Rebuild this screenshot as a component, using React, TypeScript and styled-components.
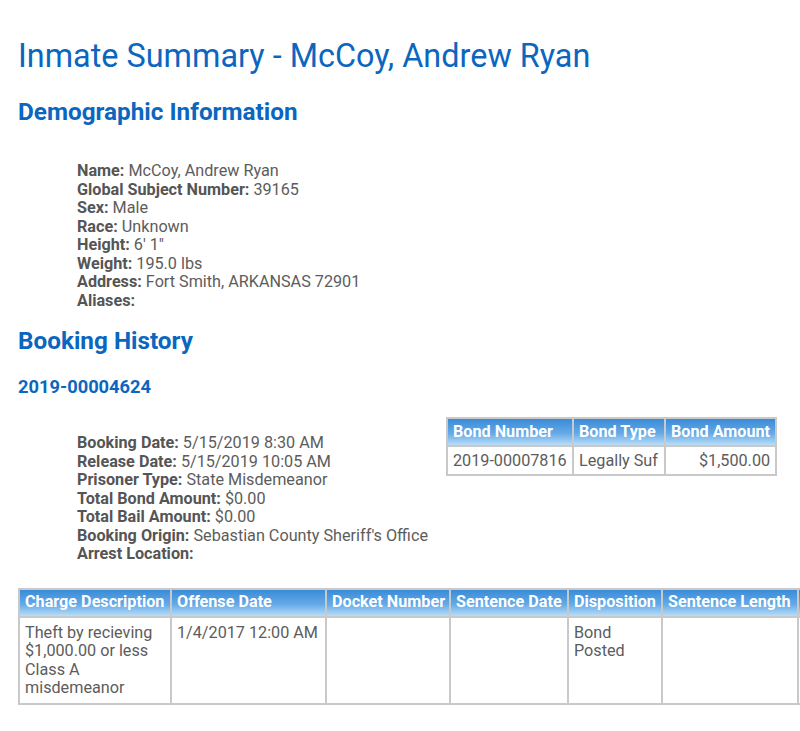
import React from 'react'
import styled, { createGlobalStyle } from 'styled-components'

const GlobalStyle = createGlobalStyle`
  html, body {
    margin: 0;
    padding: 0;
    background: #ffffff;
    overflow: hidden;
  }
  body {
    font-family: Roboto, "Liberation Sans", Arial, sans-serif;
    color: #5c5c5c;
  }
`

const Page = styled.div`
  padding: 37px 0 0 18px;
  width: 800px;
  overflow: hidden;
`

const Title = styled.h1`
  margin: 0;
  font-size: 32.4px;
  line-height: 38px;
  font-weight: 400;
  color: #0b66c0;
`

const SectionTitle = styled.h2<{ top: number }>`
  margin: ${({ top }) => top}px 0 0 0;
  font-size: 24.3px;
  line-height: 28px;
  font-weight: 700;
  color: #0b66c0;
`

const BookingNumber = styled.h3`
  margin: 21px 0 0 0;
  font-size: 18.3px;
  line-height: 22px;
  font-weight: 700;
  color: #0b66c0;
`

const Fields = styled.div<{ top: number }>`
  margin: ${({ top }) => top}px 0 0 59px;
  font-size: 16.2px;
  line-height: 18.5px;
  white-space: nowrap;
`

const Label = styled.b`
  font-weight: 700;
  color: #555555;
`

const BookingRow = styled.div`
  display: flex;
  align-items: flex-start;
  margin-top: 19px;
`

const BookingLeft = styled.div`
  width: 428px;
  flex: none;
`

const Grid = styled.table`
  border-collapse: collapse;
  font-size: 16.2px;
  line-height: 18.5px;
  color: #5c5c5c;
`

const Head = styled.th<{ w?: number }>`
  ${({ w }) => (w ? `width: ${w}px;` : '')}
  padding: 3px 5px;
  height: 28px;
  box-sizing: border-box;
  text-align: left;
  font-weight: 700;
  color: #ffffff;
  white-space: nowrap;
  background: linear-gradient(to bottom, #3a8bd8 0%, #64aae7 55%, #b9ddf7 100%);
  border: 2px solid #c9c9c9;
`

const Cell = styled.td<{ right?: boolean; pad: string }>`
  padding: ${({ pad }) => pad};
  vertical-align: top;
  text-align: ${({ right }) => (right ? 'right' : 'left')};
  border: 2px solid #c9c9c9;
  white-space: normal;
`

const ChargeGrid = styled(Grid)`
  margin-top: 24px;
  table-layout: fixed;
  width: 900px;
`

const demographics: [string, string][] = [
  ['Name:', 'McCoy, Andrew Ryan'],
  ['Global Subject Number:', '39165'],
  ['Sex:', 'Male'],
  ['Race:', 'Unknown'],
  ['Height:', '6\' 1"'],
  ['Weight:', '195.0 lbs'],
  ['Address:', 'Fort Smith, ARKANSAS 72901'],
  ['Aliases:', ''],
]

const booking: [string, string][] = [
  ['Booking Date:', '5/15/2019 8:30 AM'],
  ['Release Date:', '5/15/2019 10:05 AM'],
  ['Prisoner Type:', 'State Misdemeanor'],
  ['Total Bond Amount:', '$0.00'],
  ['Total Bail Amount:', '$0.00'],
  ['Booking Origin:', "Sebastian County Sheriff's Office"],
  ['Arrest Location:', ''],
]

const bondPad = '5px 5px 3px'
const chargePad = '6px 5px 5px'

function FieldList({ rows, top }: { rows: [string, string][]; top: number }) {
  return (
    <Fields top={top}>
      {rows.map(([k, v]) => (
        <div key={k}>
          <Label>{k}</Label> {v}
        </div>
      ))}
    </Fields>
  )
}

export default function App() {
  return (
    <>
      <GlobalStyle />
      <Page>
        <Title>Inmate Summary - McCoy, Andrew Ryan</Title>
        <SectionTitle top={23}>Demographic Information</SectionTitle>
        <FieldList rows={demographics} top={36} />
        <SectionTitle top={17}>Booking History</SectionTitle>
        <BookingNumber>2019-00004624</BookingNumber>
        <BookingRow>
          <BookingLeft>
            <FieldList rows={booking} top={17} />
          </BookingLeft>
          <Grid>
            <thead>
              <tr>
                <Head w={126}>Bond Number</Head>
                <Head w={92}>Bond Type</Head>
                <Head w={111}>Bond Amount</Head>
              </tr>
            </thead>
            <tbody>
              <tr>
                <Cell pad={bondPad}>2019-00007816</Cell>
                <Cell pad={bondPad}>Legally Suf</Cell>
                <Cell pad={bondPad} right>$1,500.00</Cell>
              </tr>
            </tbody>
          </Grid>
        </BookingRow>
        <ChargeGrid>
          <thead>
            <tr>
              <Head w={152}>Charge Description</Head>
              <Head w={155}>Offense Date</Head>
              <Head w={124}>Docket Number</Head>
              <Head w={118}>Sentence Date</Head>
              <Head w={94}>Disposition</Head>
              <Head w={136}>Sentence Length</Head>
              <Head w={121} />
            </tr>
          </thead>
          <tbody>
            <tr>
              <Cell pad={chargePad}>Theft by recieving $1,000.00 or less Class A misdemeanor</Cell>
              <Cell pad={chargePad}>1/4/2017 12:00 AM</Cell>
              <Cell pad={chargePad} />
              <Cell pad={chargePad} />
              <Cell pad={chargePad}>Bond Posted</Cell>
              <Cell pad={chargePad} />
              <Cell pad={chargePad} />
            </tr>
          </tbody>
        </ChargeGrid>
      </Page>
    </>
  )
}
